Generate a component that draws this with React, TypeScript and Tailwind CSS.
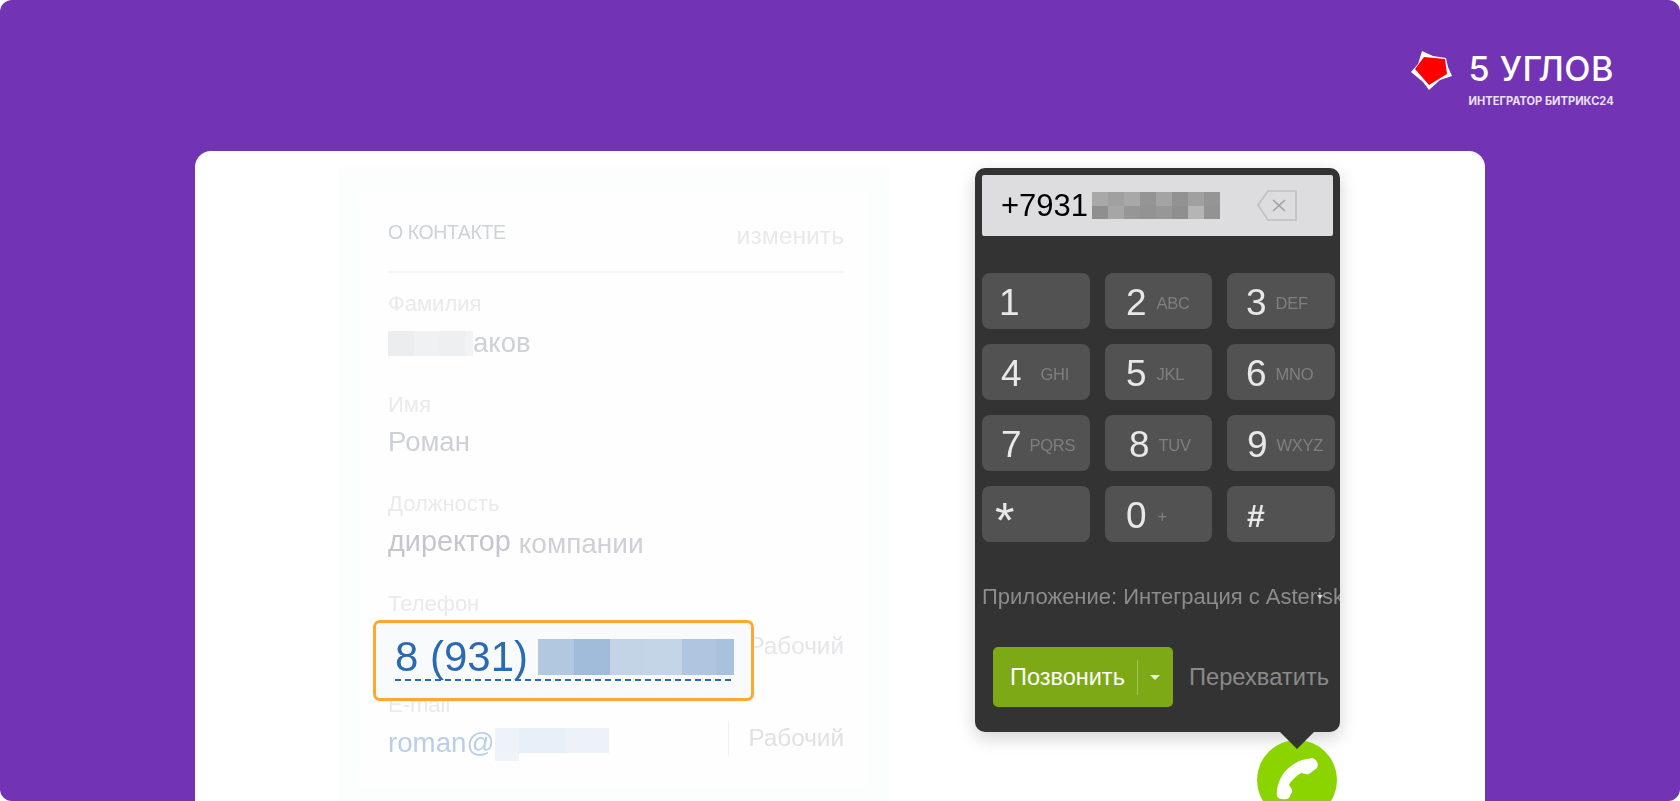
const SANS = "font-['Liberation_Sans',Arial,sans-serif]";

const keys: { d: string; s?: string; cls: string; gap: string; dcls?: string }[] = [
  { d: "1", cls: "pl-[17px]", gap: "" },
  { d: "2", s: "ABC", cls: "pl-[21px]", gap: "ml-[10px]" },
  { d: "3", s: "DEF", cls: "pl-[19px]", gap: "ml-[9px]" },
  { d: "4", s: "GHI", cls: "pl-[19px]", gap: "ml-[19px]" },
  { d: "5", s: "JKL", cls: "pl-[21px]", gap: "ml-[10px]" },
  { d: "6", s: "MNO", cls: "pl-[19px]", gap: "ml-[9px]" },
  { d: "7", s: "PQRS", cls: "pl-[19px]", gap: "ml-[8px]" },
  { d: "8", s: "TUV", cls: "pl-[24px]", gap: "ml-[9px]" },
  { d: "9", s: "WXYZ", cls: "pl-[20px]", gap: "ml-[9px]" },
  { d: "*", cls: "pl-[13px]", gap: "", dcls: "text-[50px] pt-[14px]" },
  { d: "0", s: "+", cls: "pl-[21px]", gap: "ml-[11px]" },
  { d: "#", cls: "pl-[20px]", gap: "", dcls: "text-[32px] font-bold pt-[4px]" },
];

const inputTop = ["#a8a8a8", "#a0a0a0", "#a8a8a8", "#949494", "#a4a4a4", "#929292", "#a0a0a0", "#959595"];
const inputBottom = ["#8f8f8f", "#a6a6a6", "#969696", "#939393", "#979797", "#8f8f8f", "#b5b5b5", "#939393"];
const phoneCells = ["#b2c8e0", "#a0bcda", "#c2d4e6", "#c4d5e7", "#aec6e0", "#a8c2de"];
const phoneWidths = [36, 36, 36, 36, 34, 18];

function Logo() {
  return (
    <div className="flex items-start">
      <svg width="50" height="50" viewBox="0 0 50 50" className="mt-[44px] mr-[13px]">
        <polygon fill="#ffffff" points="16,7 27,12 40,14 42,23 46,32 34,36 23,46 17,38 5,28 12,20" />
        <polygon fill="#ff0000" points="18,13 39,15 41,30 23,41 9,25" />
      </svg>
      <div className="flex flex-col pt-[44px]">
        <div className="font-['Inter',sans-serif] text-[34.2px] leading-[50px] font-medium tracking-[0.5px] text-white whitespace-nowrap">5 УГЛОВ</div>
        <div className="font-['Inter',sans-serif] text-[11.1px] leading-[14px] font-bold text-[#e9e0f5] whitespace-nowrap">ИНТЕГРАТОР БИТРИКС24</div>
      </div>
    </div>
  );
}

function Contact() {
  const label = "text-[22px] leading-[22px] text-[#e9eaec]";
  const value = "text-[27.5px] leading-[30px] text-[#cdd0d6]";
  return (
    <div className="w-[552px] h-[650px] shrink-0 rounded-[6px] bg-[#fcfdfd] pt-[24px] pl-[23px]">
      <div className={`w-[507px] h-[596px] bg-[#fefefe] pl-[27px] pr-[24px] blur-[0.7px] ${SANS}`}>
        <div className="h-[82px] flex justify-between items-start border-b-2 border-[#f6f7f7]">
          <span className="mt-[29px] text-[19.5px] leading-[24px] tracking-[-0.4px] text-[#cfd2d7]">О КОНТАКТЕ</span>
          <span className="mt-[32px] text-[24.7px] leading-[26px] text-[#e8e9eb]">изменить</span>
        </div>
        <div className={`mt-[20px] ${label}`}>Фамилия</div>
        <div className={`mt-[13px] ${value} flex items-center`}>
          <span className="w-[85px] h-[25px] flex">
            <i className="flex-1 bg-[#ecedef]" />
            <i className="flex-1 bg-[#f0f1f2]" />
            <i className="flex-1 bg-[#eeeff1]" />
            <i className="w-[8px] bg-[#f2f3f4]" />
          </span>
          <span>аков</span>
        </div>
        <div className={`mt-[36px] ${label}`}>Имя</div>
        <div className={`mt-[11px] ${value}`}>Роман</div>
        <div className={`mt-[36px] ${label}`}>Должность</div>
        <div className={`mt-[11px] flex gap-[8px] ${value}`}>
          <span className="text-[28.8px] text-[#c4c7cc]">директор</span>
          <span className="mt-[3px] text-[28px]">компании</span>
        </div>
        <div className={`mt-[34px] ${label}`}>Телефон</div>
        <div className="mt-[16px] h-[30px] flex justify-end text-[24.3px] leading-[30px] text-[#e5e6e8]">Рабочий</div>
        <div className={`mt-[33px] ${label}`}>E-mail</div>
        <div className="mt-[12px] h-[30px] flex items-center justify-between text-[27.7px] leading-[30px]">
          <div className="flex items-center">
            <span className="text-[#b9cfe7]">roman@</span>
            <span className="mt-[2px] w-[114px] h-[33px] flex flex-col">
              <span className="h-[25px] flex">
                <i className="w-[24px] bg-[#eef3f9]" />
                <i className="flex-1 bg-[#e8eff8]" />
                <i className="w-[44px] bg-[#edf2f8]" />
              </span>
              <span className="h-[8px] w-[24px] bg-[#f0f4f9]" />
            </span>
          </div>
          <div className="flex items-center -mt-[10px]">
            <span className="w-px h-[35px] bg-[#f0f1f2] mr-[19px]" />
            <span className="text-[24.3px] text-[#dfe1e4]">Рабочий</span>
          </div>
        </div>
      </div>
    </div>
  );
}

function Dialer() {
  return (
    <div className={`relative mt-[1px] w-[365px] h-[564px] shrink-0 rounded-[10px] bg-[#333333] pt-[7px] pl-[7px] pr-[5px] shadow-[0_6px_18px_rgba(0,0,0,0.18)] ${SANS}`}>
      <div className="w-[351px] h-[61px] rounded-[2px] bg-[#dddde0] flex items-center pl-[19px] blur-[0.4px]">
        <span className="text-[31px] leading-[36px] text-black">+7931</span>
        <span className="ml-[4px] w-[128px] h-[27px] flex flex-col">
          <span className="flex h-[14px]">
            {inputTop.map((c, i) => <i key={i} className="flex-1" style={{ backgroundColor: c }} />)}
          </span>
          <span className="flex h-[13px]">
            {inputBottom.map((c, i) => <i key={i} className="flex-1" style={{ backgroundColor: c }} />)}
          </span>
        </span>
        <svg width="42" height="34" viewBox="0 0 42 34" className="ml-[36px]" fill="none">
          <path d="M40 2 H12 L2 16 L12 31 H40 Z" stroke="#c0c0c3" strokeWidth="1.6" />
          <path d="M17 11 L29 22 M29 11 L17 22" stroke="#a0a0a3" strokeWidth="1.6" />
        </svg>
      </div>

      <div className="mt-[37px] grid grid-cols-[108px_107px_108px] gap-x-[15px] gap-y-[15px]">
        {keys.map((k) => (
          <div key={k.d} className={`h-[56px] rounded-[8px] bg-[#525252] flex items-center ${k.cls}`}>
            <span className={`text-[#e8e8e8] leading-[40px] blur-[0.3px] ${k.dcls ?? "text-[37px] pt-[3px]"}`}>{k.d}</span>
            {k.s && <span className={`text-[16.5px] mt-[4px] tracking-[-0.3px] text-[#7f7f7f] blur-[0.3px] ${k.gap}`}>{k.s}</span>}
          </div>
        ))}
      </div>

      <div className="mt-[40px] -mr-[5px] h-[30px] overflow-hidden whitespace-nowrap text-[22px] leading-[30px] text-[#8c8c8c] blur-[0.3px]">
        Приложение: Интеграция с Asterisk
      </div>
      <span className="absolute left-[342px] top-[427px] w-0 h-0 border-x-[3px] border-t-[4px] border-x-transparent border-t-[#dddddd]" />

      <div className="mt-[35px] ml-[11px] flex items-center">
        <div className="w-[180px] h-[60px] rounded-[5px] bg-[#7ea917] flex items-center pl-[17px]">
          <span className="w-[116px] text-[23.5px] leading-[30px] text-white whitespace-nowrap">Позвонить</span>
          <span className="ml-[11px] w-px h-[35px] bg-[#a3c45a]" />
          <span className="ml-[12px] w-0 h-0 border-x-[5px] border-t-[5px] border-x-transparent border-t-[#e6efd0]" />
        </div>
        <span className="ml-[16px] text-[23.7px] leading-[30px] text-[#8a8a8a] whitespace-nowrap">Перехватить</span>
      </div>
    </div>
  );
}

export default function App() {
  return (
    <div className="w-[1680px] h-[801px] overflow-hidden bg-white">
      <div className="relative w-full h-full rounded-[12px] bg-[#7234b4] overflow-hidden">
        <header className="h-[151px] flex justify-end pr-[66px]">
          <Logo />
        </header>
        <main className="relative mx-[195px] h-[650px] rounded-t-[16px] bg-white flex pt-[16px] pl-[143px] gap-[85px] overflow-hidden">
          <Contact />
          <Dialer />

          {/* highlighted phone number, over the contact card */}
          <div className={`absolute left-[178px] top-[469px] w-[381px] h-[81px] rounded-[7px] border-[3px] border-[#ffa72f] bg-[#f9fafc] pl-[19px] pt-[12px] ${SANS}`}>
            <div className="flex items-center h-[44px]">
              <span className="text-[42px] leading-[44px] text-[#2a6ab3] blur-[0.4px]">8 (931)</span>
              <span className="ml-[10px] flex h-[36px] blur-[0.4px]">
                {phoneCells.map((c, i) => (
                  <i key={i} style={{ backgroundColor: c, width: phoneWidths[i] }} />
                ))}
              </span>
            </div>
            <div className="w-[336px] border-t-2 border-dashed border-[#2a6ab3]" />
          </div>

          {/* dialer pointer and phone button */}
          <div className="absolute left-[1062px] top-[589px] w-[80px] h-[80px] rounded-full bg-[#8cd400]">
            <svg width="80" height="80" viewBox="0 0 80 80" className="absolute inset-0 blur-[0.4px]">
              <path fill="#ffffff" d="M50 19 C41 20 31 27 26 34 C21 42 19 50 20 56 C21 60 29 60 32 58 L35 52 C36 49 33 47 32 45 C34 41 39 36 44 33 C47 33 49 35 52 34 L60 28 C62 24 60 19 55 18 Z" />
            </svg>
          </div>
          <div className="absolute left-[1085px] top-[581px] w-0 h-0 border-x-[17px] border-t-[17px] border-x-transparent border-t-[#333333]" />
        </main>
      </div>
    </div>
  );
}
